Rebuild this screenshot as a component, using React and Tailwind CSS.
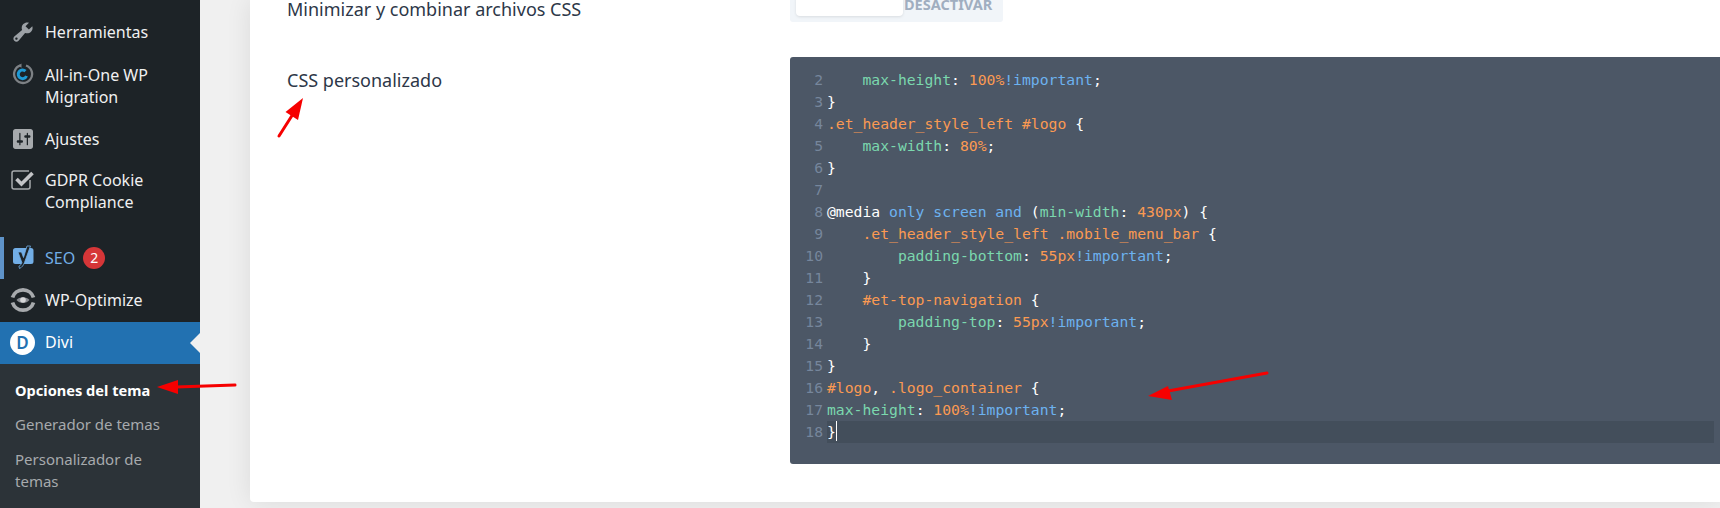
import React from 'react';

const mint = 'text-[#7bd8ae]';
const orange = 'text-[#fb9a52]';
const blue = 'text-[#6cb2f0]';
const white = 'text-white';

// each line is a list of [text, colour] chunks
const codeLines = [
  { n: 2, parts: [['    max-height', mint], [': ', white], ['100%', orange], ['!important', blue], [';', white]] },
  { n: 3, parts: [['}', white]] },
  { n: 4, parts: [['.et_header_style_left #logo', orange], [' {', white]] },
  { n: 5, parts: [['    max-width', mint], [': ', white], ['80%', orange], [';', white]] },
  { n: 6, parts: [['}', white]] },
  { n: 7, parts: [] },
  { n: 8, parts: [['@media', white], [' only screen and ', blue], ['(', white], ['min-width', mint], [': ', white], ['430px', orange], [') {', white]] },
  { n: 9, parts: [['    .et_header_style_left .mobile_menu_bar', orange], [' {', white]] },
  { n: 10, parts: [['        padding-bottom', mint], [': ', white], ['55px', orange], ['!important', blue], [';', white]] },
  { n: 11, parts: [['    }', white]] },
  { n: 12, parts: [['    #et-top-navigation', orange], [' {', white]] },
  { n: 13, parts: [['        padding-top', mint], [': ', white], ['55px', orange], ['!important', blue], [';', white]] },
  { n: 14, parts: [['    }', white]] },
  { n: 15, parts: [['}', white]] },
  { n: 16, parts: [['#logo', orange], [', ', white], ['.logo_container', orange], [' {', white]] },
  { n: 17, parts: [['max-height', mint], [': ', white], ['100%', orange], ['!important', blue], [';', white]] },
  { n: 18, parts: [['}', white]], active: true },
];

const WrenchIcon = () => (
  <svg viewBox="0 0 20 20" className="w-[24px] h-[24px] fill-[#9ca1a6]">
    <path d="M16.68 9.77c-1.34 1.34-3.3 1.67-4.95.99l-5.41 6.52c-.99.99-2.59.99-3.58 0s-.99-2.59 0-3.58l6.52-5.41c-.68-1.65-.35-3.61.99-4.95 1.28-1.28 3.12-1.62 4.72-1.06l-2.89 2.89 2.82 2.82 2.86-2.87c.53 1.58.18 3.39-1.08 4.65zM3.81 16.21c.4.39 1.04.39 1.43 0 .4-.4.4-1.04 0-1.43-.39-.4-1.03-.4-1.43 0-.39.39-.39 1.03 0 1.43z" />
  </svg>
);

const MigrationIcon = () => (
  <svg viewBox="0 0 22 22" className="w-[22px] h-[22px] fill-none -mt-[3px]">
    <path d="M8.500 2.400A9 9 0 1 0 14 2.500" stroke="#7d8185" strokeWidth="2.300" />
    <path d="M6 2.800 9.500.4v4.400z" fill="#7d8185" />
    <path d="M13.500 8.200A4.300 4.300 0 1 0 14.500 13" stroke="#1e9ad6" strokeWidth="3" />
  </svg>
);

const SettingsIcon = () => (
  <svg viewBox="2 2 16 16" className="w-[20px] h-[20px] fill-[#a7aaad]">
    <path d="M18 16V4c0-1.100-.9-2-2-2H4c-1.100 0-2 .9-2 2v12c0 1.100.9 2 2 2h12c1.100 0 2-.9 2-2zM8 11h1c.55 0 1 .45 1 1s-.45 1-1 1H8v1.500c0 .28-.22.5-.5.5s-.5-.22-.5-.5V13H6c-.55 0-1-.45-1-1s.45-1 1-1h1V5.500c0-.28.22-.5.5-.5s.5.22.5.5V11zm5-2h-1c-.55 0-1-.45-1-1s.45-1 1-1h1V5.500c0-.28.22-.5.5-.5s.5.22.5.5V7h1c.55 0 1 .45 1 1s-.45 1-1 1h-1v5.500c0 .28-.22.5-.5.5s-.5-.22-.5-.5V9z" />
  </svg>
);

const CheckIcon = () => (
  <svg viewBox="0 0 24 22" className="w-[24px] h-[22px] fill-none">
    <path d="M19 11v7a2 2 0 0 1-2 2H3a2 2 0 0 1-2-2V4a2 2 0 0 1 2-2h15" stroke="#a7aaad" strokeWidth="1.500" />
    <path d="M5.500 10l5 5 11-11" stroke="#c3c4c7" strokeWidth="3.600" />
  </svg>
);

const YoastIcon = () => (
  <svg viewBox="0 0 22 24" className="w-[22px] h-[24px] -mt-[2px]">
    <path d="M3.500 3h15.500a2.500 2.500 0 0 1 2.500 2.500v11a2.500 2.500 0 0 1-2.500 2.500H3.500A2.500 2.500 0 0 1 1 16.500v-11A2.500 2.500 0 0 1 3.500 3z" fill="#72aee6" />
    <path d="M6 7h3.500l2 5.500L15 1h3.500l-6 16.500c-.9 2.600-2.400 4.800-5 6l-.6-2.300c1.700-.9 2.500-2 3-3.500L6 7z" fill="#1d2327" stroke="#72aee6" strokeWidth=".8" />
  </svg>
);

const OptimizeIcon = () => (
  <svg viewBox="0 0 26 26" className="w-[26px] h-[26px] fill-none">
    <path d="M2.500 10.500A11 11 0 0 1 23.500 10.500" stroke="#a7aaad" strokeWidth="3.800" />
    <path d="M2.500 15.500A11 11 0 0 0 23.500 15.500" stroke="#a7aaad" strokeWidth="3.800" />
    <path d="M6.500 13c3-3.800 10-3.800 13 0-3 3.800-10 3.800-13 0z" fill="#8c8f94" />
    <circle cx="13" cy="13" r="2.800" fill="#d5d6d8" />
  </svg>
);

const DiviIcon = () => (
  <span className="flex items-center justify-center w-[25px] h-[25px] rounded-full bg-white text-[#2271b1] text-[17px] font-semibold leading-none">
    D
  </span>
);

const MenuItem = ({ icon, className = '', children }) => (
  <div className={`flex text-[16px] leading-[22px] text-[#f0f0f1] ${className}`}>
    <div className="w-[45px] h-[22px] shrink-0 flex items-center justify-center">{icon}</div>
    <div className="w-[150px]">{children}</div>
  </div>
);

const Sidebar = () => (
  <aside className="w-[200px] h-full shrink-0 bg-[#1d2327] pt-[11px]">
    <MenuItem icon={<WrenchIcon />} className="pt-[10px] pb-[10px]">Herramientas</MenuItem>
    <MenuItem icon={<MigrationIcon />} className="pt-[11px] pb-[10px]">All-in-One WP Migration</MenuItem>
    <MenuItem icon={<SettingsIcon />} className="pt-[10px] pb-[10px]">Ajustes</MenuItem>
    <MenuItem icon={<CheckIcon />} className="pt-[9px] pb-[11px]">GDPR Cookie Compliance</MenuItem>
    <div className="relative mt-[13px]">
      <div className="absolute left-0 top-0 w-[4px] h-[42px] bg-[#5e93c9]" />
      <MenuItem icon={<YoastIcon />} className="pt-[10px] pb-[10px]">
        <span className="flex items-center gap-[8px] text-[#72aee6]">
          SEO
          <span className="flex items-center justify-center w-[22px] h-[22px] rounded-full bg-[#d63638] text-white text-[14px] leading-none">2</span>
        </span>
      </MenuItem>
    </div>
    <MenuItem icon={<OptimizeIcon />} className="pt-[10px] pb-[11px]">WP-Optimize</MenuItem>
    <div className="relative bg-[#2271b1]">
      <MenuItem icon={<DiviIcon />} className="pt-[9px] pb-[11px] text-white">Divi</MenuItem>
      <div className="absolute right-0 top-[11px] w-0 h-0 border-y-[10px] border-y-transparent border-r-[10px] border-r-[#f0f0f0]" />
    </div>
    <div className="h-[200px] bg-[#2c3338] pt-[15px] pl-[15px] text-[15px] leading-[22px] text-[#a7aaad]">
      <div className="font-bold text-[14.6px] text-white">Opciones del tema</div>
      <div className="mt-[12px]">Generador de temas</div>
      <div className="mt-[13px] w-[160px]">Personalizador de temas</div>
    </div>
  </aside>
);

const CodePanel = () => (
  <div className="mt-[35px] h-[407px] bg-[#4c5766] rounded-l-[3px] pt-[12px] pr-[6px] font-['DejaVu_Sans_Mono',monospace] text-[14.73px] leading-[22px]">
    {codeLines.map((line) => (
      <div key={line.n} className="flex h-[22px]">
        <div className="w-[33px] shrink-0 text-right text-[#76869c]">{line.n}</div>
        <div className={`flex-1 ml-[4px] whitespace-pre ${line.active ? 'bg-[#434e5b]' : ''}`}>
          {line.parts.map(([text, color], i) => (
            <span key={i} className={color}>{text}</span>
          ))}
          {line.active && <span className="inline-block w-[1px] h-[20px] -mb-[4px] bg-white" />}
        </div>
      </div>
    ))}
  </div>
);

const Arrow = ({ className, viewBox, tail, head }) => (
  <svg viewBox={viewBox} className={`absolute ${className}`}>
    <path d={tail} stroke="#f60000" strokeWidth="3" strokeLinecap="round" fill="none" />
    <path d={head} fill="#f60000" />
  </svg>
);

export default function App() {
  return (
    <div className="relative flex w-full h-[508px] overflow-hidden bg-[#f0f0f0] font-['Noto_Sans',sans-serif]">
      <Sidebar />

      <main className="flex flex-col flex-1 min-w-0 pl-[50px] pb-[6px]">
        <div className="flex flex-col flex-1 bg-white rounded-bl-[4px] shadow-[0_0_26px_rgba(0,0,0,0.09)] pl-[37px] text-[18px] leading-[22px] text-[#2d3748]">
          <div className="flex -mt-[10px] h-[32px] shrink-0">
            <div className="w-[503px] shrink-0 pt-[8px]">Minimizar y combinar archivos CSS</div>
            <div className="flex w-[213px] h-[32px] rounded-[3px] bg-[#f1f5f9] p-[6px] pb-0 pr-0">
              <div className="w-[107px] h-[20px] rounded-[4px] bg-white shadow-[0_1px_3px_rgba(0,0,0,0.1)]" />
              <div className="ml-[1px] -mt-[3px] text-[14.5px] font-bold text-[#a0aec0]">DESACTIVAR</div>
            </div>
          </div>
          <div className="flex">
            <div className="w-[503px] shrink-0 pt-[47px]">CSS personalizado</div>
            <div className="flex-1 min-w-0">
              <CodePanel />
            </div>
          </div>
        </div>
      </main>

      {/* red annotation arrows on top of the screenshot */}
      <Arrow
        className="left-[270px] top-[90px] w-[40px] h-[55px]"
        viewBox="0 0 40 55"
        tail="M9 46 L23 24"
        head="M33 8 L15.500 22 L28 30 Z"
      />
      <Arrow
        className="left-[150px] top-[370px] w-[90px] h-[30px]"
        viewBox="0 0 90 30"
        tail="M26 17 L85 15"
        head="M7 17 L28 10 L28 24 Z"
      />
      <Arrow
        className="left-[1140px] top-[365px] w-[135px] h-[40px]"
        viewBox="0 0 135 40"
        tail="M28 26 L127 8"
        head="M8 31 L28 21 L32 35 Z"
      />
    </div>
  );
}
